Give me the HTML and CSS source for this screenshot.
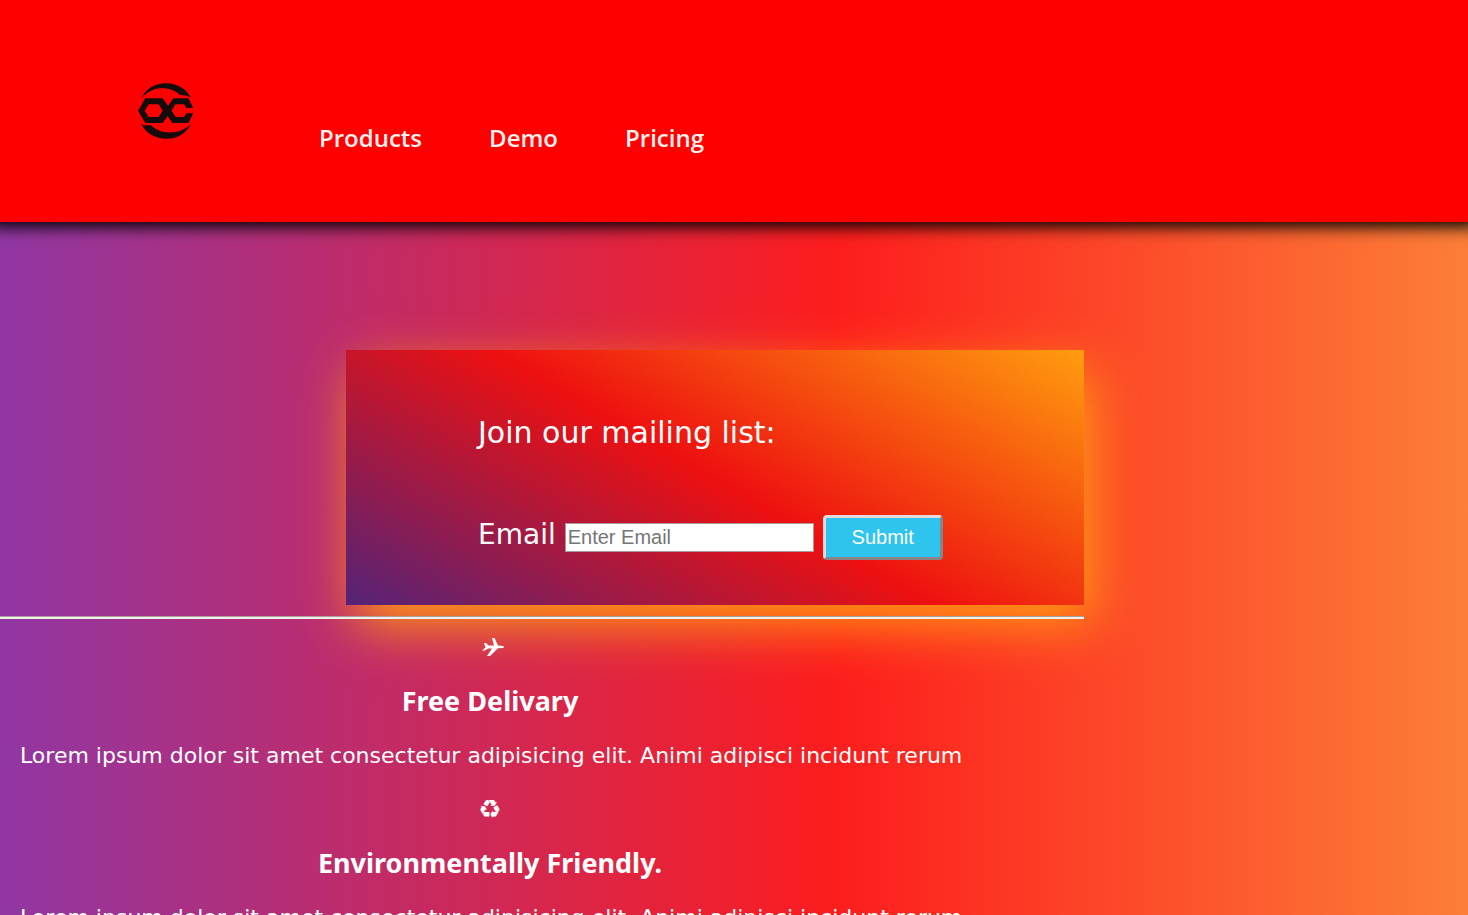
FILE: index.html
```html
<!DOCTYPE html>
<html lang="en">
<head>
<meta charset="utf-8">
<title>Mailing list</title>
<meta name="viewport" content="width=device-width, initial-scale=1">
<link rel="stylesheet" href="styles.css">
</head>
<body>
<header class="header">
  <svg class="logo" viewBox="38 40 168 168" role="img" aria-label="Logo">
    <path class="logo-fill" d="M48 86C62 56 92 40 124 41C157 42 184 58 197 86C187 77 178 77 164 76C151 62 128 54 103 56C81 58 63 69 48 86Z"/>
    <path class="logo-fill" d="M48 163C57 168 67 167 78 167C91 183 116 190 142 188C165 186 182 177 197 163C184 190 157 207 124 207C90 207 61 191 48 163Z"/>
    <path class="logo-fill" fill-rule="evenodd" d="M38 123L60 86H112L128 109L144 86H189L204 115H184L176 104H150L138 123L150 142H176L184 131H204L189 160H141L127 139L112 160H60ZM58 123L70 142H100L112 123L100 104H70Z"/>
    <path class="logo-line" d="M108 96L146 150"/>
  </svg>
  <nav class="nav">
    <a class="nav-link" href="#products">Products</a>
    <a class="nav-link" href="#demo">Demo</a>
    <a class="nav-link" href="#pricing">Pricing</a>
  </nav>
</header>
<main class="main">
  <form class="signup">
    <p class="signup-title">Join our mailing list:</p>
    <div class="signup-row">
      <label class="signup-label" for="email">Email</label>
      <input class="signup-input" id="email" type="email" placeholder="Enter Email">
      <button class="signup-button" type="submit">Submit</button>
    </div>
  </form>
  <hr class="rule">
  <section class="features" id="products">
    <article class="feature">
      <svg class="feature-icon" viewBox="0 0 28 24" aria-hidden="true"><path d="M8 8H10L12.500 10.500L18 10.500L16 3H18.500L22 10.500L27 11Q29 12 27 13L22 13.200L14 21H11L16 13.500H12L9 15.500H6L9.500 12.500Z"/></svg>
      <h2 class="feature-title">Free Delivary</h2>
      <p class="feature-text">Lorem ipsum dolor sit amet consectetur adipisicing elit. Animi adipisci incidunt rerum</p>
    </article>
    <article class="feature">
      <span class="feature-icon feature-glyph" aria-hidden="true">♻</span>
      <h2 class="feature-title">Environmentally Friendly.</h2>
      <p class="feature-text">Lorem ipsum dolor sit amet consectetur adipisicing elit. Animi adipisci incidunt rerum</p>
    </article>
  </section>
</main>
</body>
</html>
```
FILE: styles.css
```css
* { box-sizing: border-box; }
body {
  margin: 0;
  color: #fff;
  font-family: "DejaVu Sans", sans-serif;
  background: linear-gradient(90deg, #833ab4 -7%, #fd1d1d 57%, #fcb045 122%);
}
.header {
  display: flex;
  align-items: flex-start;
  gap: 125px;
  padding: 83px 138px 64px;
  background: #f00;
  box-shadow: 0 -5px 15px 10px #000;
}
.logo { width: 56px; height: 56px; }
.logo-fill { fill: #140b0b; }
.logo-line { fill: none; stroke: #140b0b; stroke-width: 17; }
.nav {
  display: flex;
  gap: 67px;
  padding-top: 35px;
}
.nav-link {
  color: #fff0f0;
  font: 600 24px/40px "Open Sans", sans-serif;
  text-decoration: none;
}
.main { padding-top: 128px; }
.signup {
  width: 738px;
  max-width: 100%;
  margin-left: 346px;
  padding: 63px 132px 45px;
  background: linear-gradient(30deg, #542378, #ee1010 50%, #ff9d0e);
  box-shadow: 10px 20px 50px #ff9a14;
}
.signup-title {
  margin: 0 0 62px;
  font-size: 30px;
  line-height: 40px;
}
.signup-row {
  display: flex;
  align-items: baseline;
}
.signup-label {
  margin-right: 9px;
  font-size: 28px;
  line-height: 40px;
}
.signup-input {
  width: 249px;
  height: 29px;
  margin-right: 9px;
  padding: 1px 2px;
  border: 1px solid #a99999;
  font: 20px "Liberation Sans", sans-serif;
}
.signup-input::placeholder { color: #757575; }
.signup-button {
  width: 120px;
  height: 45px;
  border: 3px solid;
  border-color: #e4dada #8a8486 #8a8486 #e4dada;
  border-radius: 4px;
  background: #2ec4ee;
  color: #fff;
  font: 20px "Liberation Sans", sans-serif;
}
.rule {
  width: 1084px;
  max-width: 100%;
  margin: 11px 0 0;
  border: 0;
  border-top: 1px solid #a9a09a;
  border-bottom: 2px solid #f4f0ec;
}
.features {
  width: 980px;
  max-width: 100%;
  padding: 16px 20px;
  text-align: center;
}
.feature { margin-bottom: 27px; }
.feature-icon {
  display: block;
  width: 28px;
  height: 24px;
  margin: 0 auto 22px;
  fill: #fff;
}
.feature-glyph {
  font-size: 26px;
  font-weight: bold;
  line-height: 24px;
}
.feature-title {
  margin: 0 0 21px;
  font: bold 27px/40px "Noto Sans", sans-serif;
}
.feature-text {
  margin: 0;
  font-size: 22px;
  line-height: 28px;
  white-space: nowrap;
}
```
